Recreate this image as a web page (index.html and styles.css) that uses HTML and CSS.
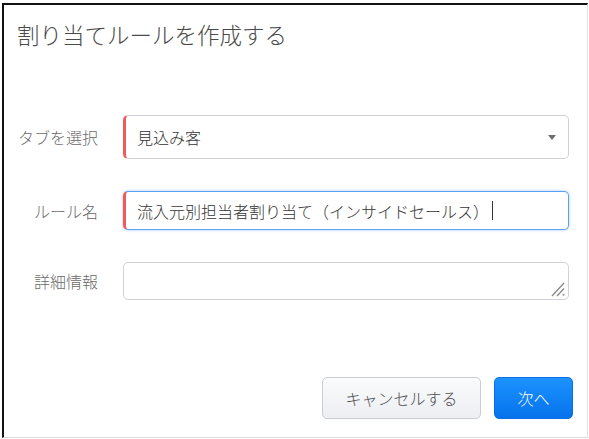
FILE: index.html
```html
<!DOCTYPE html>
<html lang="ja">
<head>
<meta charset="utf-8">
<link rel="stylesheet" href="styles.css">
</head>
<body>
<div class="dialog">
  <h1 class="title">割り当てルールを作成する</h1>
  <div class="form">
    <div class="row row-select">
      <div class="label">タブを選択</div>
      <div class="field field-select required">
        <span class="value">見込み客</span>
        <span class="caret"></span>
      </div>
    </div>
    <div class="row row-input">
      <div class="label">ルール名</div>
      <div class="field field-input required focused">
        <span class="value">流入元別担当者割り当て（インサイドセールス）</span><span class="cursor"></span>
      </div>
    </div>
    <div class="row row-textarea">
      <div class="label">詳細情報</div>
      <div class="field field-textarea">
        <svg class="grip" width="16" height="16" viewBox="0 0 16 16">
          <line x1="2" y1="15" x2="14" y2="2" stroke="#8c8c8c" stroke-width="1.4"/>
          <line x1="7" y1="15" x2="14" y2="7.5" stroke="#8c8c8c" stroke-width="1.4"/>
          <circle cx="13.5" cy="13.8" r="1" fill="#8c8c8c"/>
        </svg>
      </div>
    </div>
  </div>
  <div class="actions">
    <button class="btn btn-cancel">キャンセルする</button>
    <button class="btn btn-next">次へ</button>
  </div>
</div>
</body>
</html>
```
FILE: styles.css
```css
html, body {
  margin: 0;
  padding: 0;
  background: #ffffff;
}
body {
  font-family: "Noto Sans CJK JP", "Noto Sans", sans-serif;
  padding: 3px 0 0 2px;
}
.dialog {
  box-sizing: border-box;
  width: 586px;
  height: 435px;
  border-top: 2px solid #111;
  border-left: 2px solid #111;
  border-right: 1px solid #e2e2e2;
  border-bottom: 1px solid #dadada;
  background: #fff;
  display: flex;
  flex-direction: column;
}
.title {
  margin: 0;
  padding: 14px 0 0 13px;
  font-size: 22.5px;
  line-height: 30px;
  font-weight: 300;
  color: #4a4a4a;
}
.form {
  display: flex;
  flex-direction: column;
  padding-top: 66px;
}
.row {
  display: grid;
  grid-template-columns: 94px 446px;
  column-gap: 25px;
  align-items: center;
}
.row-input { margin-top: 32px; }
.row-textarea { margin-top: 32px; }
.label {
  text-align: right;
  font-size: 16px;
  font-weight: 300;
  color: #6a6a6a;
  line-height: 20px;
}
.field {
  box-sizing: border-box;
  border: 1px solid #cfd3d8;
  border-radius: 5px;
  background: #fff;
  display: flex;
  align-items: center;
  padding-left: 11px;
  font-size: 16px;
  font-weight: 300;
  color: #333;
  font-family: inherit;
}
.required {
  border-left: 3px solid #f25a5a;
}
.field-select {
  height: 44px;
  position: relative;
}
.caret {
  position: absolute;
  right: 12px;
  top: 19px;
  width: 0;
  height: 0;
  border-left: 4px solid transparent;
  border-right: 4px solid transparent;
  border-top: 5px solid #6f6f6f;
}
.field-input {
  height: 39px;
  border-top-color: #5aa2f2;
  border-right-color: #5aa2f2;
  border-bottom-color: #5aa2f2;
  box-shadow: 0 0 3px rgba(70, 150, 240, 0.55);
}
.cursor {
  display: inline-block;
  width: 1px;
  height: 19px;
  background: #333;
  margin-left: 3px;
}
.field-textarea {
  height: 38px;
  position: relative;
}
.grip {
  position: absolute;
  right: 2px;
  bottom: 2px;
}
.actions {
  margin-top: auto;
  margin-bottom: 18px;
  display: flex;
  justify-content: flex-end;
  gap: 13px;
  padding-right: 14px;
}
.btn {
  font-family: inherit;
  font-size: 16px;
  font-weight: 300;
  height: 42px;
  border-radius: 5px;
  cursor: pointer;
}
.btn-cancel {
  width: 159px;
  background: linear-gradient(#fafbfc, #eceef2);
  border: 1px solid #c9cdd3;
  color: #505050;
}
.btn-next {
  width: 79px;
  background: linear-gradient(#1c93ff, #0672ec);
  border: 1px solid #0a6fe4;
  color: #fff;
}
```
